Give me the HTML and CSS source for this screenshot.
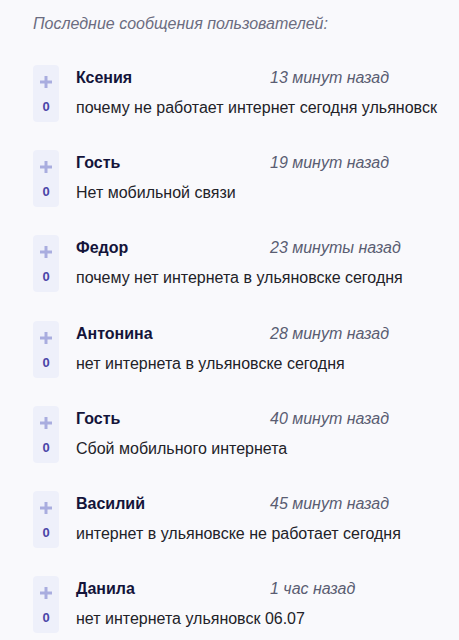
FILE: index.html
```html
<!DOCTYPE html>
<html lang="ru">
<head>
  <meta charset="UTF-8">
  <meta name="viewport" content="width=device-width, initial-scale=1.0">
  <title>Последние сообщения</title>
  <link rel="stylesheet" href="styles.css">
</head>
<body>
  <div class="feed">
    <div class="feed-title">Последние сообщения пользователей:</div>

    <div class="comment">
      <div class="vote">
        <svg class="vote-plus" width="12" height="12" viewBox="0 0 12 12"><path d="M6 0v12M0 6h12" stroke="currentColor" stroke-width="3"/></svg>
        <span class="vote-count">0</span>
      </div>
      <div class="comment-body">
        <div class="comment-head">
          <span class="comment-name">Ксения</span>
          <span class="comment-time">13 минут назад</span>
        </div>
        <div class="comment-text">почему не работает интернет сегодня ульяновск</div>
      </div>
    </div>

    <div class="comment">
      <div class="vote">
        <svg class="vote-plus" width="12" height="12" viewBox="0 0 12 12"><path d="M6 0v12M0 6h12" stroke="currentColor" stroke-width="3"/></svg>
        <span class="vote-count">0</span>
      </div>
      <div class="comment-body">
        <div class="comment-head">
          <span class="comment-name">Гость</span>
          <span class="comment-time">19 минут назад</span>
        </div>
        <div class="comment-text">Нет мобильной связи</div>
      </div>
    </div>

    <div class="comment">
      <div class="vote">
        <svg class="vote-plus" width="12" height="12" viewBox="0 0 12 12"><path d="M6 0v12M0 6h12" stroke="currentColor" stroke-width="3"/></svg>
        <span class="vote-count">0</span>
      </div>
      <div class="comment-body">
        <div class="comment-head">
          <span class="comment-name">Федор</span>
          <span class="comment-time">23 минуты назад</span>
        </div>
        <div class="comment-text">почему нет интернета в ульяновске сегодня</div>
      </div>
    </div>

    <div class="comment">
      <div class="vote">
        <svg class="vote-plus" width="12" height="12" viewBox="0 0 12 12"><path d="M6 0v12M0 6h12" stroke="currentColor" stroke-width="3"/></svg>
        <span class="vote-count">0</span>
      </div>
      <div class="comment-body">
        <div class="comment-head">
          <span class="comment-name">Антонина</span>
          <span class="comment-time">28 минут назад</span>
        </div>
        <div class="comment-text">нет интернета в ульяновске сегодня</div>
      </div>
    </div>

    <div class="comment">
      <div class="vote">
        <svg class="vote-plus" width="12" height="12" viewBox="0 0 12 12"><path d="M6 0v12M0 6h12" stroke="currentColor" stroke-width="3"/></svg>
        <span class="vote-count">0</span>
      </div>
      <div class="comment-body">
        <div class="comment-head">
          <span class="comment-name">Гость</span>
          <span class="comment-time">40 минут назад</span>
        </div>
        <div class="comment-text">Сбой мобильного интернета</div>
      </div>
    </div>

    <div class="comment">
      <div class="vote">
        <svg class="vote-plus" width="12" height="12" viewBox="0 0 12 12"><path d="M6 0v12M0 6h12" stroke="currentColor" stroke-width="3"/></svg>
        <span class="vote-count">0</span>
      </div>
      <div class="comment-body">
        <div class="comment-head">
          <span class="comment-name">Василий</span>
          <span class="comment-time">45 минут назад</span>
        </div>
        <div class="comment-text">интернет в ульяновске не работает сегодня</div>
      </div>
    </div>

    <div class="comment">
      <div class="vote">
        <svg class="vote-plus" width="12" height="12" viewBox="0 0 12 12"><path d="M6 0v12M0 6h12" stroke="currentColor" stroke-width="3"/></svg>
        <span class="vote-count">0</span>
      </div>
      <div class="comment-body">
        <div class="comment-head">
          <span class="comment-name">Данила</span>
          <span class="comment-time">1 час назад</span>
        </div>
        <div class="comment-text">нет интернета ульяновск 06.07</div>
      </div>
    </div>
  </div>
</body>
</html>
```

FILE: styles.css
```css
* {
  margin: 0;
  padding: 0;
  box-sizing: border-box;
}

body {
  font-family: 'Liberation Sans', Arial, sans-serif;
  background: #f9f9fc;
  color: #222228;
}

.feed {
  padding: 14px 0 0 33px;
}

.feed-title {
  font-size: 16px;
  line-height: 20px;
  font-style: italic;
  color: #6b6c80;
  margin-bottom: 31px;
}

.comment {
  display: flex;
  gap: 17px;
  margin-bottom: 28.2px;
}

.vote {
  width: 26px;
  height: 57px;
  flex: none;
  background: #eef0fa;
  border-radius: 4px;
  display: flex;
  flex-direction: column;
  align-items: center;
}

.vote-plus {
  color: #a9addf;
  margin-top: 11px;
}

.vote-count {
  margin-top: 11px;
  font-size: 13px;
  line-height: 16px;
  font-weight: 700;
  color: #4b45a8;
}

.comment-body {
  padding-top: 3px;
}

.comment-head {
  display: flex;
  line-height: 20px;
  font-size: 16px;
}

.comment-name {
  width: 194px;
  font-weight: 700;
  color: #14143a;
}

.comment-time {
  font-style: italic;
  color: #5a5d72;
}

.comment-text {
  margin-top: 10px;
  font-size: 16px;
  line-height: 20px;
}
```
